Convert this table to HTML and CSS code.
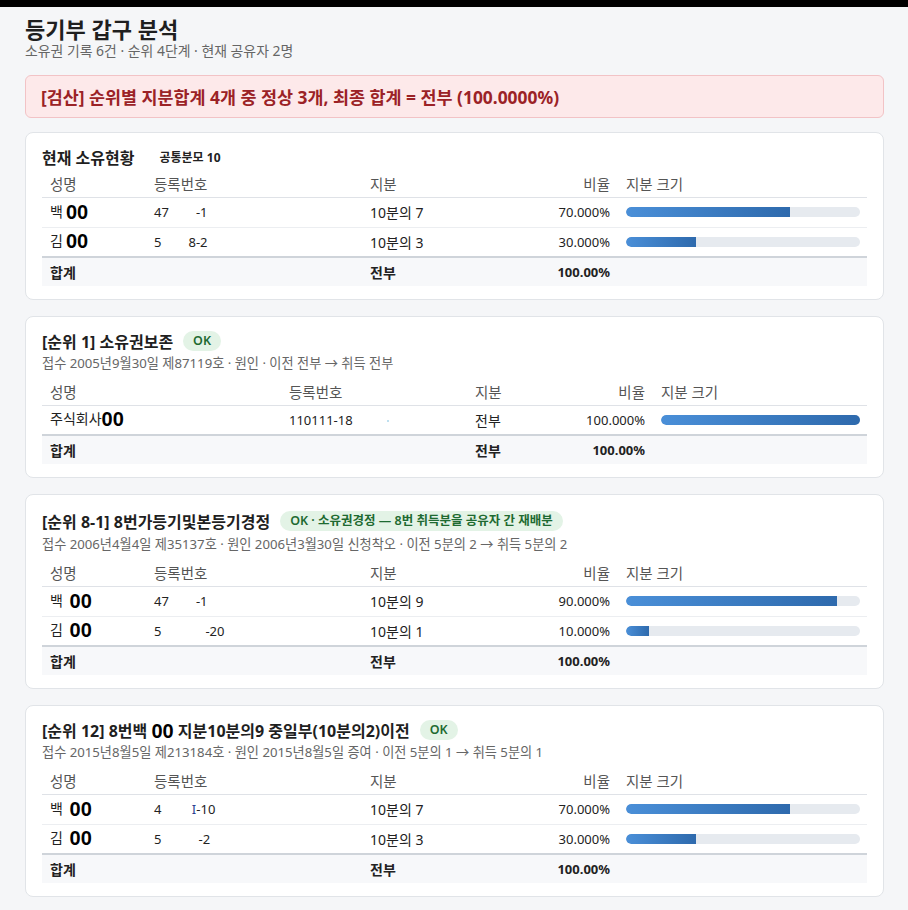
FILE: index.html
```html
<!DOCTYPE html>
<html lang="ko">
<head>
<meta charset="utf-8">
<link rel="stylesheet" href="styles.css">
</head>
<body>
<div class="topbar"></div>
<main class="page">
  <h1 class="title">등기부 갑구 분석</h1>
  <p class="sub">소유권 기록 6건 · 순위 4단계 · 현재 공유자 2명</p>
  <div class="alert">[검산] 순위별 지분합계 4개 중 정상 3개, 최종 합계 = 전부 (100.0000%)</div>

  <section class="card">
    <div class="card-head"><span class="card-title">현재 소유현황</span><span class="denom">공통분모 10</span></div>
    <table class="tbl tbl-a">
      <colgroup><col class="c1"><col class="c2"><col class="c3"><col class="c4"><col class="c5"></colgroup>
      <thead><tr><th>성명</th><th>등록번호</th><th>지분</th><th class="r">비율</th><th>지분 크기</th></tr></thead>
      <tbody>
        <tr><td class="ko">백<span class="mask">00</span></td><td class="num pre">47        -1</td><td class="ko">10분의 7</td><td class="num r">70.000%</td><td><div class="bar"><div class="fill" style="width:70%"></div></div></td></tr>
        <tr><td class="ko">김<span class="mask">00</span></td><td class="num pre">5        8-2</td><td class="ko">10분의 3</td><td class="num r">30.000%</td><td><div class="bar"><div class="fill" style="width:30%"></div></div></td></tr>
      </tbody>
      <tfoot><tr><td>합계</td><td></td><td>전부</td><td class="num r">100.00%</td><td></td></tr></tfoot>
    </table>
  </section>

  <section class="card">
    <div class="card-head"><span class="card-title">[순위 1] 소유권보존</span><span class="badge">OK</span></div>
    <p class="meta">접수 2005년9월30일 제87119호 · 원인 · 이전 전부 → 취득 전부</p>
    <table class="tbl tbl-b">
      <colgroup><col class="c1"><col class="c2"><col class="c3"><col class="c4"><col class="c5"></colgroup>
      <thead><tr><th>성명</th><th>등록번호</th><th>지분</th><th class="r">비율</th><th>지분 크기</th></tr></thead>
      <tbody>
        <tr><td class="ko">주식회사<span class="mask tight">00</span></td><td class="num">110111-18<span class="dot"></span></td><td class="ko">전부</td><td class="num r">100.000%</td><td><div class="bar"><div class="fill" style="width:100%"></div></div></td></tr>
      </tbody>
      <tfoot><tr><td>합계</td><td></td><td>전부</td><td class="num r">100.00%</td><td></td></tr></tfoot>
    </table>
  </section>

  <section class="card">
    <div class="card-head tall"><span class="card-title">[순위 8-1] 8번가등기및본등기경정</span><span class="badge">OK · 소유권경정 — 8번 취득분을 공유자 간 재배분</span></div>
    <p class="meta">접수 2006년4월4일 제35137호 · 원인 2006년3월30일 신청착오 · 이전 5분의 2 → 취득 5분의 2</p>
    <table class="tbl tbl-a">
      <colgroup><col class="c1"><col class="c2"><col class="c3"><col class="c4"><col class="c5"></colgroup>
      <thead><tr><th>성명</th><th>등록번호</th><th>지분</th><th class="r">비율</th><th>지분 크기</th></tr></thead>
      <tbody>
        <tr><td class="ko">백 <span class="mask">00</span></td><td class="num pre">47        -1</td><td class="ko">10분의 9</td><td class="num r">90.000%</td><td><div class="bar"><div class="fill" style="width:90%"></div></div></td></tr>
        <tr><td class="ko">김 <span class="mask">00</span></td><td class="num pre">5             -20</td><td class="ko">10분의 1</td><td class="num r">10.000%</td><td><div class="bar"><div class="fill" style="width:10%"></div></div></td></tr>
      </tbody>
      <tfoot><tr><td>합계</td><td></td><td>전부</td><td class="num r">100.00%</td><td></td></tr></tfoot>
    </table>
  </section>

  <section class="card">
    <div class="card-head"><span class="card-title">[순위 12] 8번백 <span class="mask">00</span> 지분10분의9 중일부(10분의2)이전</span><span class="badge">OK</span></div>
    <p class="meta">접수 2015년8월5일 제213184호 · 원인 2015년8월5일 증여 · 이전 5분의 1 → 취득 5분의 1</p>
    <table class="tbl tbl-a">
      <colgroup><col class="c1"><col class="c2"><col class="c3"><col class="c4"><col class="c5"></colgroup>
      <thead><tr><th>성명</th><th>등록번호</th><th>지분</th><th class="r">비율</th><th>지분 크기</th></tr></thead>
      <tbody>
        <tr><td class="ko">백 <span class="mask">00</span></td><td class="num pre">4         <span class="blue">I</span>-10</td><td class="ko">10분의 7</td><td class="num r">70.000%</td><td><div class="bar"><div class="fill" style="width:70%"></div></div></td></tr>
        <tr><td class="ko">김 <span class="mask">00</span></td><td class="num pre">5           -2</td><td class="ko">10분의 3</td><td class="num r">30.000%</td><td><div class="bar"><div class="fill" style="width:30%"></div></div></td></tr>
      </tbody>
      <tfoot><tr><td>합계</td><td></td><td>전부</td><td class="num r">100.00%</td><td></td></tr></tfoot>
    </table>
  </section>
</main>
</body>
</html>
```

FILE: styles.css
```css
* { box-sizing: border-box; }
html, body { margin: 0; padding: 0; }
body {
  background: #f5f6f8;
  font-family: "Noto Sans", "Noto Sans CJK KR", sans-serif;
  color: #222;
  font-size: 13px;
}
.topbar { height: 7px; background: #000; }
.page { padding: 8px 24px 16px 25px; }
.title {
  margin: 0;
  font-size: 22px;
  font-weight: 700;
  line-height: 28px;
  color: #1f1f1f;
}
.sub {
  margin: -1px 0 0;
  font-size: 13.9px;
  line-height: 18px;
  color: #666;
}
.alert {
  margin-top: 15px;
  height: 43px;
  display: flex;
  align-items: center;
  padding: 0 15px;
  background: #fde9ea;
  border: 1px solid #f2c3c6;
  border-radius: 6px;
  color: #9b2226;
  font-size: 17.4px;
  font-weight: 700;
}
.card {
  margin-top: 14px;
  background: #fff;
  border: 1px solid #e1e4e8;
  border-radius: 8px;
  padding: 13px 16px 13px 16px;
}
.card + .card { margin-top: 16px; }
.card-head {
  display: flex;
  align-items: center;
  gap: 10px;
  height: 22px;
}
.card-head.tall { height: 24px; margin-top: 1px; }
.card-title {
  font-size: 16px;
  font-weight: 700;
  color: #1f1f1f;
  white-space: nowrap;
}
.denom {
  margin-left: 15px;
  font-size: 12px;
  font-weight: 700;
  color: #222;
}
.badge {
  background: #e3f3e6;
  color: #1e6a31;
  font-size: 12.5px;
  font-weight: 600;
  line-height: 20px;
  padding: 0 10px;
  border-radius: 10px;
  white-space: nowrap;
}
.meta {
  margin: 0;
  font-size: 13.2px;
  line-height: 22px;
  color: #666;
  white-space: nowrap;
}
.tbl {
  width: 100%;
  border-collapse: collapse;
  table-layout: fixed;
  margin-top: 5px;
}
.card-head + .tbl { margin-top: 3px; }
.tbl th {
  font-weight: 400;
  color: #555;
  text-align: left;
  padding: 0 8px;
  height: 26px;
  border-bottom: 1px solid #dfe2e7;
  font-size: 14.5px;
}
.tbl td {
  padding: 0 8px;
  height: 30px;
  border-bottom: 1px solid #eceef1;
  white-space: nowrap;
  font-size: 14px;
}
.tbl td.num { font-size: 13px; }
.tbl td.pre { white-space: pre; }
.tbl tbody tr:last-child td { border-bottom: none; }
.tbl tfoot td {
  background: #f7f8fa;
  border-top: 2px solid #cfd4da;
  border-bottom: none;
  font-weight: 700;
  height: 29px;
}
.tbl .r { text-align: right; }
.blue { color: #2b3f8f; }
.dot {
  display: inline-block;
  width: 2px;
  height: 2px;
  background: #bfe0f0;
  margin-left: 34px;
  vertical-align: middle;
}
.mask {
  font-family: "Liberation Sans", Arial, sans-serif;
  font-weight: 700;
  font-size: 20px;
  color: #000;
  margin-left: 3px;
  vertical-align: -2px;
}
.card-title .mask { margin-left: 0; font-size: 20px; vertical-align: -1px; }
.mask.tight { margin-left: 0; }

.tbl-a .c1 { width: 104px; }
.tbl-a .c2 { width: 216px; }
.tbl-a .c3 { width: 168px; }
.tbl-a .c4 { width: 88px; }
.tbl-b .c1 { width: 239px; }
.tbl-b .c2 { width: 186px; }
.tbl-b .c3 { width: 103px; }
.tbl-b .c4 { width: 83px; }

.bar {
  height: 10px;
  background: #e6eaef;
  border-radius: 5px;
  overflow: hidden;
  margin-right: -1px;
}
.fill {
  height: 100%;
  background: linear-gradient(90deg, #4a8fd8, #2e6aad);
  border-radius: 5px 0 0 5px;
}
```
